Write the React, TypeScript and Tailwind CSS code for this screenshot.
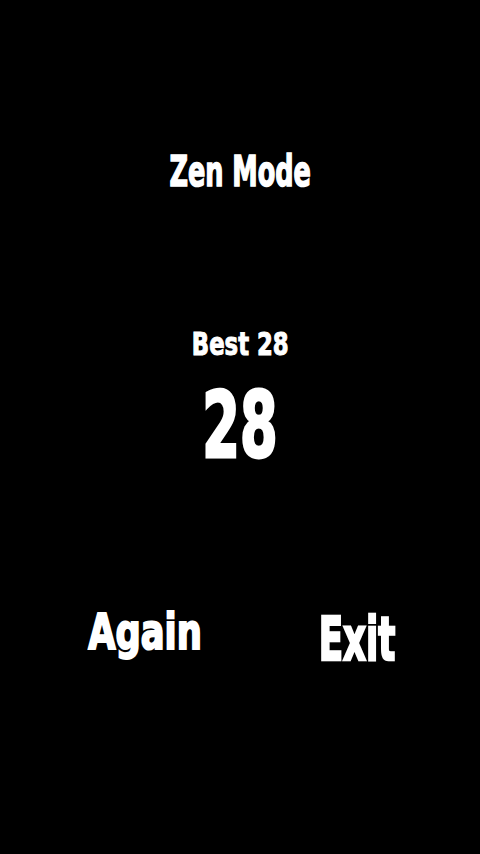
const font = "font-['DejaVu_Sans_Condensed','Liberation_Sans',sans-serif] font-bold";

const App = () => {
  return (
    <div className={`flex h-[854px] w-full flex-col items-center bg-black text-white ${font}`}>
      <h1 className="mt-[150px] inline-block scale-x-[0.66] text-[43px] leading-none [-webkit-text-stroke:1.5px_#fff]">
        Zen Mode
      </h1>

      <div className="mt-[135px] inline-block scale-x-[0.79] text-[32px] leading-none [-webkit-text-stroke:1px_#fff]">
        Best 28
      </div>
      <div className="mt-[20px] inline-block scale-x-[0.66] text-[91px] leading-none [-webkit-text-stroke:3px_#fff]">
        28
      </div>

      <div className="mt-[137px] flex w-full items-start pl-[65px]">
        <button className="w-[160px] scale-x-[0.8] text-center text-[49px] leading-none [-webkit-text-stroke:2px_#fff]">
          Again
        </button>
        <button className="ml-[52px] w-[160px] scale-x-[0.65] text-center text-[61px] leading-none [-webkit-text-stroke:2.5px_#fff]">
          Exit
        </button>
      </div>
    </div>
  );
};

export default App;
